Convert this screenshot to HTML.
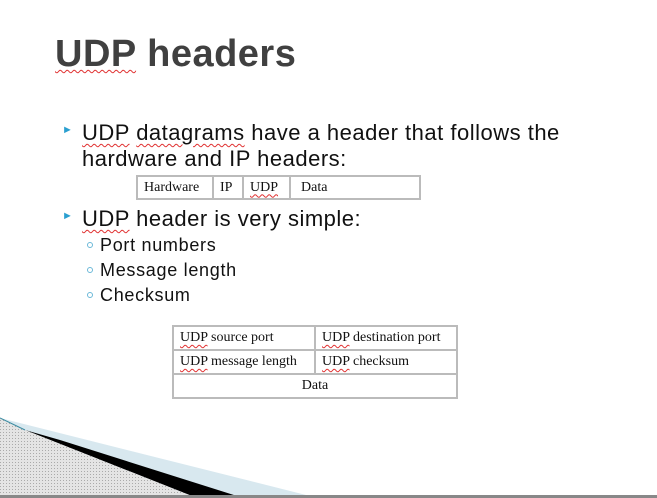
<!DOCTYPE html>
<html><head><meta charset="utf-8"><style>
body{margin:0;width:657px;height:498px;background:#fff;position:relative;overflow:hidden;font-family:"Liberation Sans","DejaVu Sans",sans-serif;}
.sq{text-decoration:underline wavy #e03030;text-decoration-thickness:1px;text-underline-offset:3px;}
.t{position:absolute;white-space:nowrap;}
h1{position:absolute;left:55px;top:30px;margin:0;font-size:38px;font-weight:bold;color:#404040;line-height:48px;letter-spacing:0.5px;}
.b{font-size:22px;color:#111;line-height:26px;letter-spacing:0.5px;}
.s{font-size:18px;color:#111;letter-spacing:0.7px;}
.tri{position:absolute;color:#2a9fd0;font-size:11px;}
.circ{position:absolute;width:4px;height:4px;border:1px solid #6bb8d8;border-radius:50%;}
table{position:absolute;border-collapse:collapse;font-family:"Liberation Serif",serif;font-size:14px;color:#111;}
td{border:2px solid #bbb;padding:0 6px;height:21px;}
</style></head><body>
<h1><span class="sq">UDP</span> headers</h1>
<div class="tri" style="left:62px;top:124px">&#9658;</div>
<div class="t b" style="left:82px;top:120px"><span class="sq">UDP</span> <span class="sq">datagrams</span> have a header that follows the</div>
<div class="t b" style="left:82px;top:146px">hardware and IP headers:</div>
<table style="left:136px;top:175px;width:285px">
<tr><td style="width:62px">Hardware</td><td style="width:16px">IP</td><td style="width:33px"><span class="sq">UDP</span></td><td style="padding-left:10px">Data</td></tr></table>
<div class="tri" style="left:62px;top:210px">&#9658;</div>
<div class="t b" style="left:82px;top:206px"><span class="sq">UDP</span> header is very simple:</div>
<div class="circ" style="left:87px;top:242px"></div>
<div class="t s" style="left:100px;top:235px">Port numbers</div>
<div class="circ" style="left:87px;top:267px"></div>
<div class="t s" style="left:100px;top:260px">Message length</div>
<div class="circ" style="left:87px;top:292px"></div>
<div class="t s" style="left:100px;top:285px">Checksum</div>
<table style="left:172px;top:325px;width:286px">
<tr><td style="width:128px;height:22px"><span class="sq">UDP</span> source port</td><td><span class="sq">UDP</span> destination port</td></tr>
<tr><td style="height:22px"><span class="sq">UDP</span> message length</td><td><span class="sq">UDP</span> checksum</td></tr>
<tr><td colspan="2" style="text-align:center;height:22px">Data</td></tr></table>
<svg style="position:absolute;left:0;top:0" width="657" height="498">
<defs><pattern id="p" width="3" height="3" patternUnits="userSpaceOnUse"><rect width="3" height="3" fill="#e4e4e4"/><rect width="1" height="1" fill="#aaa"/></pattern></defs>
<polygon points="0,418 310,496 0,496" fill="#d8e8ef"/>
<polygon points="25,430 60,440 237,496 192,496" fill="#000"/>
<polygon points="0,418 25,430 192,496 0,496" fill="url(#p)"/>
<line x1="0" y1="418" x2="25" y2="430" stroke="#3a8aa0" stroke-width="1"/>
<rect x="0" y="495" width="657" height="3" fill="#888"/>
</svg>
</body></html>
